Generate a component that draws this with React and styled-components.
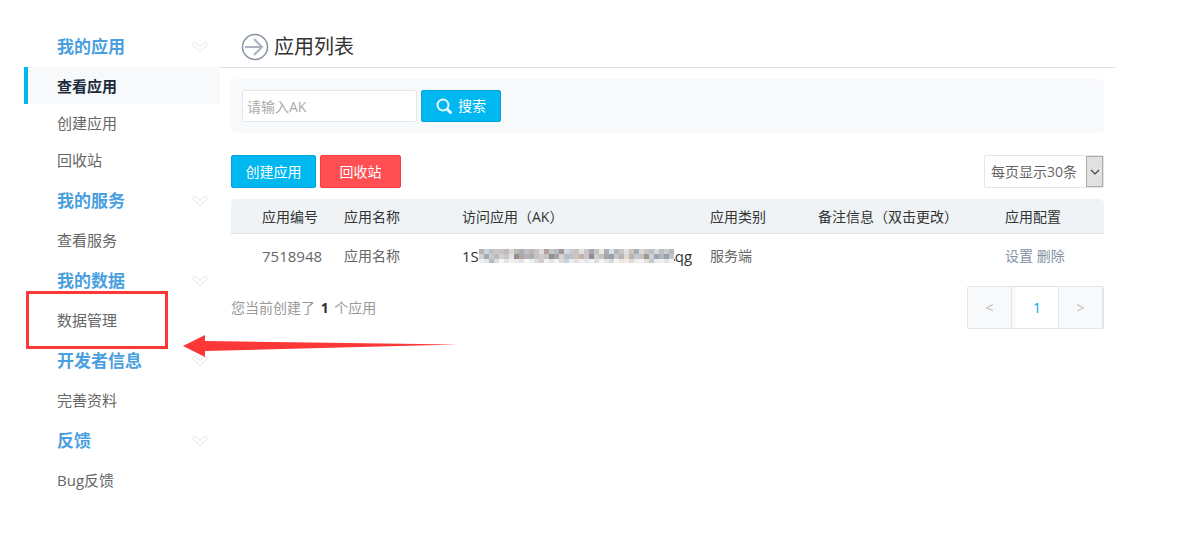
import React from 'react';
import styled, { createGlobalStyle } from 'styled-components';

const GlobalStyle = createGlobalStyle`
  * {
    box-sizing: border-box;
  }
  body {
    margin: 0;
    background: #fff;
    color: #666;
    font-family: 'Open Sans', 'Noto Sans CJK SC', sans-serif;
    font-size: 14px;
    line-height: 20px;
  }
  button, input, select {
    font: inherit;
    margin: 0;
  }
  a {
    color: inherit;
    text-decoration: none;
  }
`;

const Page = styled.div`
  display: flex;
  padding: 24px 66px 24px 24px;
`;

// Sidebar
const Sidebar = styled.nav`
  flex: 0 0 196px;
`;

const GroupTitle = styled.h2`
  display: flex;
  align-items: center;
  justify-content: space-between;
  height: 43px;
  margin: 0;
  padding: 3px 12px 0 33px;
  color: #4a9fe0;
  font-size: 17px;
  font-weight: 700;
`;

const GroupList = styled.ul`
  margin: 0;
  padding: 0;
  list-style: none;
`;

const GroupItem = styled.li`
  position: relative;
`;

const ItemLink = styled.a`
  display: block;
  height: 37px;
  padding-left: 29px;
  border-left: 4px solid ${({ $active }) => ($active ? '#00b7ee' : 'transparent')};
  background: ${({ $active }) => ($active ? '#f8f9fb' : 'transparent')};
  color: ${({ $active }) => ($active ? '#1c2b3c' : '#666')};
  font-size: 15px;
  font-weight: ${({ $active }) => ($active ? 700 : 400)};
  line-height: 38px;
`;

// Red marker over the highlighted entry
const MarkFrame = styled.span`
  position: absolute;
  top: -10px;
  left: 2px;
  width: 142px;
  height: 58px;
  border: 3px solid #fb3737;
  pointer-events: none;
`;

const MarkArrow = styled.svg`
  position: absolute;
  top: 33px;
  left: 158px;
  z-index: 1;
  pointer-events: none;
`;

// Main column
const Main = styled.main`
  flex: 1;
  min-width: 0;
`;

const Header = styled.header`
  display: flex;
  align-items: center;
  gap: 5px;
  height: 44px;
  padding: 2px 0 0 21px;
  border-bottom: 1px solid #dfe1e4;
`;

const PageTitle = styled.h1`
  margin: 0;
  color: #333;
  font-size: 20px;
  font-weight: 400;
`;

const Content = styled.div`
  padding: 11px 11px 0;
`;

const SearchBar = styled.form`
  display: flex;
  gap: 4px;
  padding: 11px;
  border-radius: 5px;
  background: #f8f9fb;
`;

const SearchInput = styled.input`
  width: 175px;
  height: 32px;
  padding: 0 4px;
  border: 1px solid #e1e6ec;
  border-radius: 2px;
  background: #fff;
  &::placeholder {
    color: #aaa;
    opacity: 1;
  }
`;

const Button = styled.button`
  display: flex;
  align-items: center;
  justify-content: center;
  gap: 5px;
  width: ${({ $width }) => $width || 80}px;
  height: ${({ $tall }) => ($tall ? 33 : 32)}px;
  padding: 0;
  border: 1px solid ${({ $danger }) => ($danger ? '#fa3c42' : '#00a5e0')};
  border-radius: 2px;
  background: ${({ $danger }) => ($danger ? '#ff4f53' : '#00b7f0')};
  color: #fff;
`;

const Toolbar = styled.div`
  display: flex;
  gap: 4px;
  margin: 22px 0 11px;
`;

const PageSize = styled.label`
  position: relative;
  margin-left: auto;
`;

const PageSizeSelect = styled.select`
  appearance: none;
  display: block;
  width: 120px;
  height: 33px;
  padding: 0 20px 0 6px;
  border: 1px solid #e1e6ec;
  border-radius: 2px;
  background: #fff;
  color: #666;
`;

const SelectArrow = styled.span`
  position: absolute;
  top: 1px;
  right: 1px;
  display: flex;
  align-items: center;
  justify-content: center;
  width: 17px;
  height: 31px;
  border: 1px solid #acacac;
  background: #e1e1e1;
  pointer-events: none;
`;

const Table = styled.table`
  width: 100%;
  table-layout: fixed;
  border-spacing: 0;
`;

const HeadCell = styled.th`
  height: 35px;
  padding: 1px 0 0;
  border-bottom: 1px solid #dbe2e8;
  background: #eff3f6;
  color: #333;
  font-weight: 400;
  text-align: left;
  white-space: nowrap;
  &:first-child {
    padding-left: 31px;
    border-top-left-radius: 5px;
  }
  &:last-child {
    border-top-right-radius: 5px;
  }
`;

const Cell = styled.td`
  height: 43px;
  padding: 0;
  white-space: nowrap;
  &:first-child {
    padding-left: 31px;
    font-size: 15px;
  }
`;

const KeyText = styled.span`
  display: flex;
  align-items: center;
  color: #333;
  font-size: 15px;
`;

const ActionLink = styled.a`
  color: #8492a6;
`;

const Footer = styled.footer`
  display: flex;
  align-items: center;
  justify-content: space-between;
  margin-top: 9px;
`;

const Summary = styled.p`
  margin: 0;
  color: #999;
  strong {
    margin: 0 2px;
    color: #333;
  }
`;

const Pager = styled.div`
  display: flex;
  border: 1px solid #e1e6ec;
  border-radius: 2px;
  background: #f8f9fb;
`;

const PagerButton = styled.button`
  width: ${({ $current }) => ($current ? 42 : 43)}px;
  height: 41px;
  margin-left: ${({ $current }) => ($current ? 4 : 0)}px;
  padding: 0;
  border: 0;
  background: ${({ $current }) => ($current ? '#fff' : '#f8f9fb')};
  color: ${({ $current }) => ($current ? '#00a5e8' : '#bbb')};
`;

const PagerDivider = styled.span`
  width: 1px;
  background: #e1e6ec;
`;

const groups = [
  { title: '我的应用', items: ['查看应用', '创建应用', '回收站'] },
  { title: '我的服务', items: ['查看服务'] },
  { title: '我的数据', items: ['数据管理'] },
  { title: '开发者信息', items: ['完善资料'] },
  { title: '反馈', items: ['Bug反馈'] },
];

const columns = [
  { name: '应用编号', width: 113 },
  { name: '应用名称', width: 118 },
  { name: '访问应用（AK）', width: 248 },
  { name: '应用类别', width: 108 },
  { name: '备注信息（双击更改）', width: 187 },
  { name: '应用配置', width: 99 },
];

// Blocks that hide the middle of the key, one list per row
const maskRows = [
  ['#b5b0b3', '#c9d5e0', '#c0c0c4', '#cbc5c8', '#c8c2c4', '#b9bcbb', '#dcd6cd', '#bcb8b8', '#a8adba', '#c4c1c0', '#b9b6b5', '#c7c4c6', '#dedcda', '#b3a09d', '#c5c5c5', '#b8b9bd', '#a29598', '#cfdce5', '#cccaca', '#c6c5c3', '#dfe2e1', '#c8c6c9', '#a9a6aa', '#c3c3c2', '#e9e9dc', '#a8aeba', '#d9dedf', '#b8b5b5', '#c5c6c8', '#dce1e4', '#cfc2b7', '#a2adbb', '#dbd9d4', '#c9c8c8', '#bdbdbc', '#d3dae0', '#c1bec0', '#cbcccd', '#b9b8ba'],
  ['#d4d2d1', '#9eabb8', '#c7c9ca', '#bbb9bb', '#d2d1d0', '#cac5c6', '#e4e3e1', '#918f91', '#b5a69a', '#b3b5ba', '#afaba9', '#c5c4c5', '#d4c9c2', '#c3c5c8', '#8f8e95', '#aaa49f', '#d5d4d2', '#b6c0ca', '#c0c0c0', '#c9c6c5', '#c7b2a3', '#c7c8cb', '#918f93', '#d2d1d0', '#bdc4ca', '#a8a4a2', '#93a0b0', '#c9c6c4', '#b3b2b5', '#e6d8cb', '#b6b5b6', '#c8cacd', '#c5c4c1', '#a39789', '#cdd0d2', '#9aa6b4', '#b9b5b2', '#93a1b2', '#c7c5c4'],
  ['#efefef', '#e8e8e8', '#b7bdbf', '#dcdfe1', '#f4f4f4', '#e3e3e3', '#f2f2f2', '#ecebea', '#dfe3e6', '#fbfaf7', '#eef1f4', '#dddcdb', '#cfcdcc', '#f2f2f2', '#e5e5e5', '#f4f4f3', '#dbdcdd', '#c7d4de', '#eeeeee', '#e2e2e2', '#f0f0f0', '#e6e6e6', '#f2f2f2', '#dfdfdf', '#f5f5f5', '#e3e7ea', '#d7d9db', '#f6f6f4', '#ebe9e7', '#f3ede7', '#dcdddd', '#eeeeee', '#f4f4f4', '#e4e3e2', '#c5cad0', '#ededed', '#f0f0f0', '#e3e4e6', '#f2f2f2'],
];

const Chevron = () => (
  <svg width="16" height="12" viewBox="0 0 16 12" fill="none" strokeLinecap="round" strokeLinejoin="round" aria-hidden="true">
    <path d="M3 3.500 8 8 13 3.500" stroke="#ececed" strokeWidth="5" />
    <path d="M3 3.500 8 8 13 3.500" stroke="#fff" strokeWidth="3" />
  </svg>
);

const KeyMask = () => (
  <svg width="196" height="14" viewBox="0 0 196 14" shapeRendering="crispEdges" aria-hidden="true">
    {maskRows.map((row, y) =>
      row.map((fill, x) => (
        <rect key={`${x}-${y}`} x={x * 5} y={y * 5} width="5" height="5" fill={fill} />
      ))
    )}
    <rect x="195" y="10" width="1" height="2" fill="#555" />
  </svg>
);

const App = () => {
  return (
    <>
      <GlobalStyle />
      <Page>
        <Sidebar>
          {groups.map((group) => (
            <section key={group.title}>
              <GroupTitle>
                {group.title}
                <Chevron />
              </GroupTitle>
              <GroupList>
                {group.items.map((item) => (
                  <GroupItem key={item}>
                    <ItemLink href="#" $active={item === '查看应用'}>{item}</ItemLink>
                    {item === '数据管理' && (
                      <>
                        <MarkFrame />
                        <MarkArrow width="276" height="24" viewBox="0 0 276 24" fill="#fb3737" aria-hidden="true">
                          <path d="M1 12 23 1V7L275 10.500 23 17V23Z" />
                        </MarkArrow>
                      </>
                    )}
                  </GroupItem>
                ))}
              </GroupList>
            </section>
          ))}
        </Sidebar>
        <Main>
          <Header>
            <svg width="28" height="28" viewBox="0 0 28 28" fill="none" aria-hidden="true">
              <circle cx="14" cy="14" r="12.500" stroke="#8793a2" strokeWidth="1.500" />
              <path d="M4 14H21M13 6 21 14 13 22" stroke="#a9b2be" strokeWidth="2" />
            </svg>
            <PageTitle>应用列表</PageTitle>
          </Header>
          <Content>
            <SearchBar>
              <SearchInput type="text" placeholder="请输入AK" aria-label="AK" />
              <Button type="button">
                <svg width="17" height="17" viewBox="0 0 17 17" fill="none" stroke="#e8f8fe" aria-hidden="true">
                  <circle cx="7" cy="7" r="5.500" strokeWidth="2" />
                  <path d="M11.500 11.500 14.500 14.500" strokeWidth="3" strokeLinecap="round" />
                </svg>
                搜索
              </Button>
            </SearchBar>
            <Toolbar>
              <Button type="button" $tall $width={85}>创建应用</Button>
              <Button type="button" $tall $width={81} $danger>回收站</Button>
              <PageSize>
                <PageSizeSelect aria-label="每页显示">
                  <option>每页显示30条</option>
                </PageSizeSelect>
                <SelectArrow>
                  <svg width="10" height="6" viewBox="0 0 10 6" fill="none" stroke="#444" aria-hidden="true">
                    <path d="M1 1 5 5 9 1" strokeWidth="1.200" />
                  </svg>
                </SelectArrow>
              </PageSize>
            </Toolbar>
            <Table>
              <colgroup>
                {columns.map((col) => <col key={col.name} width={col.width} />)}
              </colgroup>
              <thead>
                <tr>
                  {columns.map((col) => <HeadCell key={col.name}>{col.name}</HeadCell>)}
                </tr>
              </thead>
              <tbody>
                <tr>
                  <Cell>7518948</Cell>
                  <Cell>应用名称</Cell>
                  <Cell>
                    <KeyText>
                      1S
                      <KeyMask />
                      qg
                    </KeyText>
                  </Cell>
                  <Cell>服务端</Cell>
                  <Cell />
                  <Cell>
                    <ActionLink href="#">设置</ActionLink>{' '}
                    <ActionLink href="#">删除</ActionLink>
                  </Cell>
                </tr>
              </tbody>
            </Table>
            <Footer>
              <Summary>您当前创建了 <strong>1</strong> 个应用</Summary>
              <Pager>
                <PagerButton type="button">&lt;</PagerButton>
                <PagerDivider />
                <PagerButton type="button" $current>1</PagerButton>
                <PagerDivider />
                <PagerButton type="button">&gt;</PagerButton>
                <PagerDivider />
              </Pager>
            </Footer>
          </Content>
        </Main>
      </Page>
    </>
  );
};

export default App;
